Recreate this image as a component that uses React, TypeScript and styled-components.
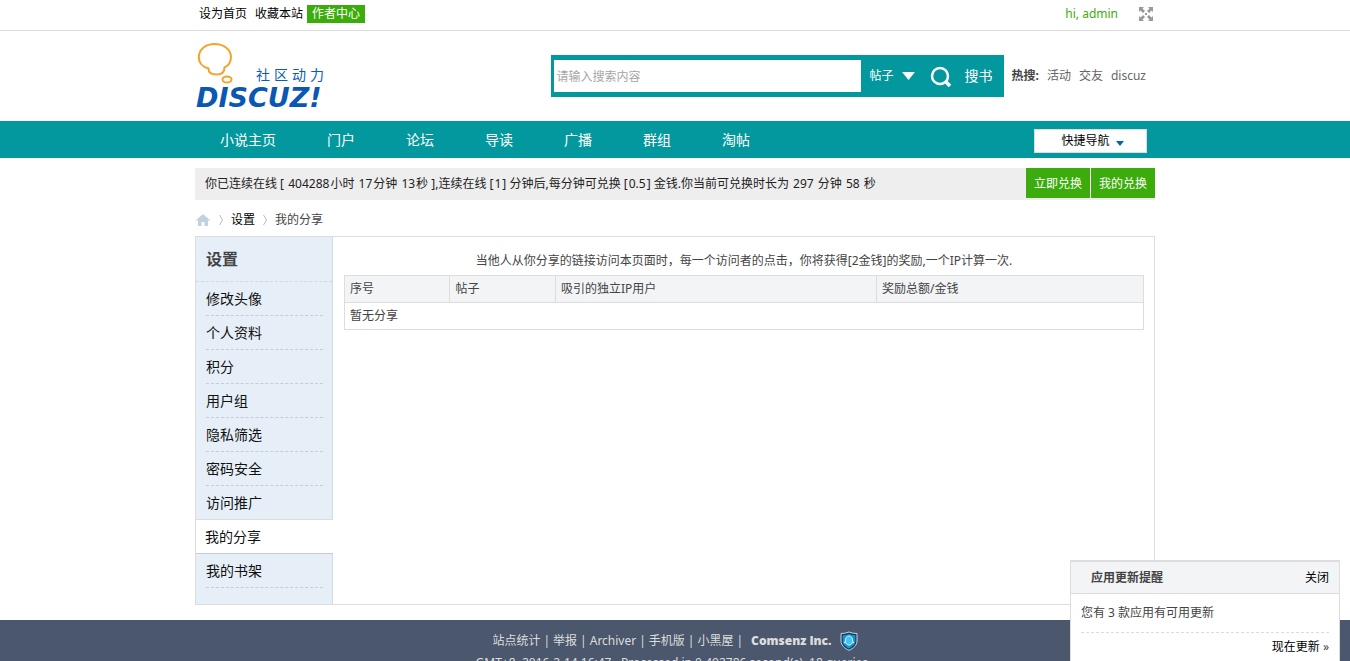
import React from "react";
import styled, { createGlobalStyle } from "styled-components";

const teal = "#03989e";
const green = "#3cac0c";
const line = "#dddddd";

const GlobalStyle = createGlobalStyle`
  *, *::before, *::after { box-sizing: border-box; }
  html { scrollbar-width: none; }
  body {
    margin: 0;
    background: #fff;
    color: #444;
    font: 12px/18px "Noto Sans", "Noto Sans CJK SC", sans-serif;
  }
  a { color: inherit; text-decoration: none; }
  button, input, select { font: inherit; margin: 0; }
  button { border: 0; cursor: pointer; }
  ul { list-style: none; margin: 0; padding: 0; }
  h1, h2, p { margin: 0; font-size: inherit; }
`;

const Wrap = styled.div`
  width: 100%;
  max-width: 960px;
  margin: 0 auto;
`;

const TopBar = styled.div`
  border-bottom: 1px solid ${line};
`;

const TopInner = styled(Wrap)`
  display: flex;
  align-items: center;
  gap: 8px;
  height: 30px;
  padding: 0 1px 2px 4px;
  color: #000;
`;

const AuthorLink = styled.a`
  margin-left: -4px;
  padding: 0 5px;
  background: ${green};
  color: #fff;
`;

const UserLink = styled.a`
  margin-left: auto;
  color: ${green};
`;

const IconButton = styled.button`
  display: flex;
  margin-left: 12px;
  padding: 0;
  background: none;
`;

const Header = styled(Wrap)`
  display: flex;
  align-items: center;
  justify-content: space-between;
  height: 90px;
  padding-right: 9px;
`;

const LogoLink = styled.a`
  svg { display: block; overflow: visible; }
`;

const SearchArea = styled.div`
  display: flex;
  align-items: center;
  gap: 8px;
`;

const SearchForm = styled.form`
  display: flex;
  align-items: center;
  width: 453px;
  height: 42px;
  padding: 0 11px 0 3px;
  background: ${teal};
  color: #fff;
`;

const SearchInput = styled.input`
  flex: 1;
  min-width: 0;
  height: 32px;
  padding: 0 3px;
  border: 0;
  background: #fff;
  color: #444;
  &::placeholder { color: #a6a6a6; opacity: 1; }
`;

const TypeButton = styled.button`
  display: flex;
  align-items: center;
  gap: 8px;
  padding: 0 15px 0 9px;
  background: none;
  color: #fff;
`;

const SearchButton = styled.button`
  display: flex;
  align-items: center;
  gap: 13px;
  padding: 0;
  background: none;
  color: #fff;
  font-size: 14px;
`;

const HotLinks = styled.div`
  display: flex;
  gap: 8px;
  color: #666;
  strong { color: #444; }
`;

const Nav = styled.nav`
  background: ${teal};
`;

const NavInner = styled(Wrap)`
  display: flex;
  align-items: center;
  gap: 51px;
  height: 37px;
  padding: 0 8px 0 25px;
  color: #fff;
  font-size: 14px;
`;

const QuickNav = styled.button`
  display: flex;
  align-items: center;
  justify-content: center;
  gap: 6px;
  width: 113px;
  height: 24px;
  margin: 3px 0 0 auto;
  padding: 0 0 0 4px;
  border: 1px solid ${line};
  background: #fff;
  color: #000;
  font-size: 12px;
  svg { margin-top: 4px; }
`;

const Notice = styled(Wrap)`
  display: flex;
  justify-content: space-between;
  height: 32px;
  margin-top: 10px;
  padding-left: 10px;
  background: #eee;
  color: #222;
  line-height: 32px;
`;

const Num = styled.span`
  margin: 0 1px;
`;

const NoticeActions = styled.div`
  display: flex;
  gap: 1px;
  height: 32px;
  padding-bottom: 2px;
  background: linear-gradient(#fff, #fff) top / 100% 30px no-repeat;
`;

const GreenButton = styled.button`
  width: 64px;
  padding: 0;
  background: ${green};
  color: #fff;
`;

const Crumbs = styled(Wrap)`
  display: flex;
  align-items: center;
  gap: 7px;
  height: 36px;
  padding-top: 4px;
  a { color: #000; }
  svg { display: block; }
`;

const Panel = styled(Wrap)`
  display: flex;
  border: 1px solid ${line};
`;

const Sidebar = styled.aside`
  flex: 0 0 137px;
  padding-bottom: 16px;
  border-right: 1px solid #d3dce3;
  background: #e6eff7;
  color: #111;
`;

const SideTitle = styled.h2`
  height: 45px;
  padding-left: 10px;
  border-bottom: 1px dashed #d0d9e1;
  color: #444;
  font-size: 16px;
  line-height: 44px;
`;

const SideItem = styled.li<{ $active?: boolean }>`
  height: 34px;
  margin: ${p => (p.$active ? "0 -1px 0 0" : "0 9px 0 10px")};
  padding-left: ${p => (p.$active ? "9px" : "0")};
  border-bottom: 1px ${p => (p.$active ? "solid" : "dashed")} #c6ccd1;
  background: ${p => (p.$active ? "#fff" : "none")};
  box-shadow: ${p => (p.$active ? `0 -1px ${line}` : "none")};
  font-size: 14px;
  line-height: 34px;
`;

const Main = styled.main`
  flex: 1;
  min-width: 0;
  padding: 15px 10px 15px 11px;
`;

const Hint = styled.p`
  margin-bottom: 5px;
  text-align: center;
`;

const ShareTable = styled.table`
  width: 100%;
  border-collapse: collapse;
  table-layout: fixed;
  border: 1px solid ${line};
  th, td {
    height: 27px;
    padding: 0 5px;
    border-bottom: 1px solid ${line};
    font-weight: 400;
    text-align: left;
  }
  th { border-right: 1px solid ${line}; background: #f2f4f6; }
`;

const Footer = styled.footer`
  margin-top: 15px;
  padding: 12px 0 10px;
  background: #4b576d;
  color: #ddd;
  text-align: center;
`;

const FooterLinks = styled.div`
  display: flex;
  align-items: center;
  justify-content: center;
  gap: 3px;
  height: 18px;
  margin-bottom: 4px;
`;

const CompanyLink = styled.a`
  margin: 0 5px;
  font-weight: 800;
  font-family: "Open Sans", sans-serif;
`;

const Popup = styled.section`
  position: fixed;
  right: 10px;
  bottom: 0;
  width: 270px;
  border: 1px solid ${line};
  border-width: 2px 1px 0;
  background: #fff;
`;

const PopupHead = styled.header`
  display: flex;
  align-items: center;
  justify-content: space-between;
  height: 32px;
  padding: 0 10px 0 20px;
  border-bottom: 1px solid ${line};
  background: #f2f4f6;
  button { padding: 0; background: none; color: #000; }
`;

const PopupBody = styled.div`
  padding: 0 10px;
`;

const PopupText = styled.p`
  height: 39px;
  border-bottom: 1px dashed ${line};
  line-height: 38px;
`;

const PopupMore = styled.p`
  height: 28px;
  line-height: 28px;
  text-align: right;
  a { color: #000; }
`;

const Logo = () => (
  <svg width="132" height="64" viewBox="0 3 132 64" role="img" aria-label="Discuz!">
    <g fill="none" stroke="#f5a32e" strokeWidth="2">
      <path d="M13.500 27.500C7.500 26 3.500 21.500 3.800 15.500C4.300 8 11 3 19.500 3C28.500 3 35.500 8 36 15.500C36 20.500 34 24.500 29.500 26.500C29.500 31 26.500 33.500 21.500 33.500C16.500 33.500 13.500 31.500 13.500 27.500Z" />
      <ellipse cx="32" cy="38.500" rx="4.500" ry="3" />
    </g>
    <text x="61" y="39" fontSize="14" letterSpacing="4" fill="#0b5cb4" fontFamily="Noto Sans CJK SC, sans-serif">社区动力</text>
    <text x="1" y="66" fontSize="27" fill="#0b58b3" fontFamily="DejaVu Sans, sans-serif" fontWeight="700" fontStyle="italic">DISCUZ!</text>
  </svg>
);

const ExpandIcon = () => (
  <svg width="16" height="16" viewBox="0 0 16 16" fill="#999">
    <path d="M1 1h5L4.500 2.500 7 5 5 7 2.500 4.500 1 6zM15 1v5l-1.500-1.500L11 7 9 5l2.500-2.500L10 1zM1 15v-5l1.500 1.500L5 9l2 2-2.500 2.500L6 15zM15 15h-5l1.500-1.500L9 11l2-2 2.500 2.500L15 10z" />
    <path d="M7 7h2v2H7z" />
  </svg>
);

const SearchIcon = () => (
  <svg width="22" height="24" viewBox="0 -2 22 24" fill="none" stroke="#fff">
    <circle cx="10" cy="10" r="8" strokeWidth="2.500" />
    <path d="M15.500 15.500l4.500 4.500" strokeWidth="3.500" />
  </svg>
);

const Caret = ({ w, h, color }: { w: number; h: number; color: string }) => (
  <svg width={w} height={h} viewBox="0 0 14 8" preserveAspectRatio="none">
    <path d="M0 0h14L7 8z" fill={color} />
  </svg>
);

const HomeIcon = () => (
  <svg width="16" height="14" viewBox="0 0 16 14" fill="#c0d2e0">
    <path d="M8 1l7.500 6.500H13V13H9.500V9h-3v4H3V7.500H.5z" />
  </svg>
);

const Chevron = () => (
  <svg width="6" height="12" viewBox="0 0 6 12" fill="none" stroke="#bbb">
    <path d="M1.500 1l3 5-3 5" />
  </svg>
);

const ShieldIcon = () => (
  <svg width="18" height="20" viewBox="0 0 18 20">
    <path d="M9 1c2.500 1 5 1.500 8 1.500V10c0 4-3.500 7.500-8 9.300C4.500 17.500 1 14 1 10V2.500C4 2.500 6.500 2 9 1z" fill="#123f5c" stroke="#c9d6dd" />
    <path d="M9 3c2 .8 4 1.200 6.300 1.300V10c0 3-2.600 5.700-6.300 7.400C5.300 15.700 2.700 13 2.700 10V4.300C5 4.200 7 3.800 9 3z" fill="#1794cf" />
    <path d="M9 5c-2.400 0-3.500 1.800-3.400 4L4.500 12l1.400-.4C6.500 13.500 7.600 14 9 14s2.500-.5 3.100-2.400l1.400.4-1.100-3C12.500 6.800 11.400 5 9 5z" fill="#45c2f1" stroke="#d8f3ff" />
  </svg>
);

const navItems = ["小说主页", "门户", "论坛", "导读", "广播", "群组", "淘帖"];
const sideItems = ["修改头像", "个人资料", "积分", "用户组", "隐私筛选", "密码安全", "访问推广", "我的分享", "我的书架"];
const footerItems = ["站点统计", "举报", "Archiver", "手机版", "小黑屋"];

export default function App() {
  return (
    <>
      <GlobalStyle />
      <TopBar>
        <TopInner>
          <a href="#">设为首页</a>
          <a href="#">收藏本站</a>
          <AuthorLink href="#">作者中心</AuthorLink>
          <UserLink href="#">hi, admin</UserLink>
          <IconButton type="button" aria-label="切换到宽版"><ExpandIcon /></IconButton>
        </TopInner>
      </TopBar>

      <Header>
        <LogoLink href="#"><Logo /></LogoLink>
        <SearchArea>
          <SearchForm onSubmit={e => e.preventDefault()}>
            <SearchInput type="text" placeholder="请输入搜索内容" aria-label="请输入搜索内容" />
            <TypeButton type="button">帖子<Caret w={13} h={8} color="#fff" /></TypeButton>
            <SearchButton type="submit"><SearchIcon />搜书</SearchButton>
          </SearchForm>
          <HotLinks>
            <strong>热搜:</strong>
            <a href="#">活动</a>
            <a href="#">交友</a>
            <a href="#">discuz</a>
          </HotLinks>
        </SearchArea>
      </Header>

      <Nav>
        <NavInner>
          {navItems.map(t => <a href="#" key={t}>{t}</a>)}
          <QuickNav type="button">快捷导航<Caret w={8} h={5} color="#0066aa" /></QuickNav>
        </NavInner>
      </Nav>

      <Notice>
        <p>
          你已连续在线 [ <Num>404288</Num>小时 <Num>17</Num>分钟 <Num>13</Num>秒 ],连续在线 [<Num>1</Num>] 分钟后,每分钟可兑换 [<Num>0.5</Num>] 金钱.你当前可兑换时长为 <Num>297</Num> 分钟 <Num>58</Num> 秒
        </p>
        <NoticeActions>
          <GreenButton type="button">立即兑换</GreenButton>
          <GreenButton type="button">我的兑换</GreenButton>
        </NoticeActions>
      </Notice>

      <Crumbs>
        <a href="#" aria-label="首页"><HomeIcon /></a>
        <Chevron />
        <a href="#">设置</a>
        <Chevron />
        <span>我的分享</span>
      </Crumbs>

      <Panel>
        <Sidebar>
          <SideTitle>设置</SideTitle>
          <ul>
            {sideItems.map(t => (
              <SideItem key={t} $active={t === "我的分享"}><a href="#">{t}</a></SideItem>
            ))}
          </ul>
        </Sidebar>
        <Main>
          <Hint>当他人从你分享的链接访问本页面时，每一个访问者的点击，你将获得[2金钱]的奖励,一个IP计算一次.</Hint>
          <ShareTable>
            <colgroup>
              <col style={{ width: "13.2%" }} />
              <col style={{ width: "13.2%" }} />
              <col style={{ width: "40.2%" }} />
              <col />
            </colgroup>
            <thead>
              <tr><th>序号</th><th>帖子</th><th>吸引的独立IP用户</th><th>奖励总额/金钱</th></tr>
            </thead>
            <tbody>
              <tr><td colSpan={4}>暂无分享</td></tr>
            </tbody>
          </ShareTable>
        </Main>
      </Panel>

      <Footer>
        <FooterLinks>
          {footerItems.map(t => (
            <React.Fragment key={t}><a href="#">{t}</a><span>|</span></React.Fragment>
          ))}
          <CompanyLink href="#">Comsenz Inc.</CompanyLink>
          <ShieldIcon />
        </FooterLinks>
        <p>GMT+8, 2016-2-14 16:47 , Processed in 0.492786 second(s), 18 queries .</p>
      </Footer>

      <Popup>
        <PopupHead>
          <strong>应用更新提醒</strong>
          <button type="button">关闭</button>
        </PopupHead>
        <PopupBody>
          <PopupText>您有 3 款应用有可用更新</PopupText>
          <PopupMore><a href="#">现在更新</a> »</PopupMore>
        </PopupBody>
      </Popup>
    </>
  );
}
